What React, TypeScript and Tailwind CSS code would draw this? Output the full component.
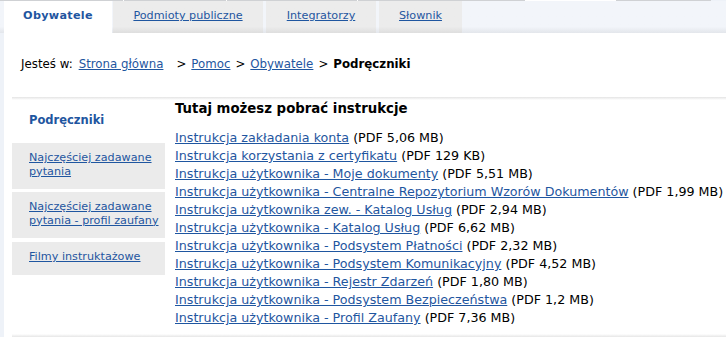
import React from "react";

const links: [string, string][] = [
  ["Instrukcja zakładania konta", "(PDF 5,06 MB)"],
  ["Instrukcja korzystania z certyfikatu", "(PDF 129 KB)"],
  ["Instrukcja użytkownika - Moje dokumenty", "(PDF 5,51 MB)"],
  ["Instrukcja użytkownika - Centralne Repozytorium Wzorów Dokumentów", "(PDF 1,99 MB)"],
  ["Instrukcja użytkownika zew. - Katalog Usług", "(PDF 2,94 MB)"],
  ["Instrukcja użytkownika - Katalog Usług", "(PDF 6,62 MB)"],
  ["Instrukcja użytkownika - Podsystem Płatności", "(PDF 2,32 MB)"],
  ["Instrukcja użytkownika - Podsystem Komunikacyjny", "(PDF 4,52 MB)"],
  ["Instrukcja użytkownika - Rejestr Zdarzeń", "(PDF 1,80 MB)"],
  ["Instrukcja użytkownika - Podsystem Bezpieczeństwa", "(PDF 1,2 MB)"],
  ["Instrukcja użytkownika - Profil Zaufany", "(PDF 7,36 MB)"],
];

const tabCls =
  "shrink-0 bg-gradient-to-b from-[#ececec] from-80% to-[#dedede] flex items-center justify-center text-[#1f56a0] underline pb-[1px]";

export default function App() {
  return (
    <div
      className="w-[726px] h-[337px] overflow-hidden bg-[#eef2f8] flex flex-col text-[12.7px] text-black"
      style={{ fontFamily: '"DejaVu Sans", Verdana, sans-serif' }}
    >
      {/* thin cut-off row at very top */}
      <div className="flex h-[1px] shrink-0">
        <div className="w-[123px] shrink-0 bg-[#cfd1d4]" />
        <div className="w-[1px] shrink-0 bg-white" />
        <div className="w-[102px] shrink-0 bg-[#cfd1d4]" />
        <div className="w-[1px] shrink-0 bg-white" />
        <div className="w-[130px] shrink-0 bg-[#cfd1d4]" />
        <div className="w-[1px] shrink-0 bg-white" />
        <div className="w-[167px] shrink-0 bg-[#cfd1d4]" />
        <div className="w-[91px] shrink-0 bg-white" />
        <div className="w-[95px] shrink-0 bg-[#cfd1d4]" />
      </div>
      {/* tabs */}
      <div className="flex h-[32px] shrink-0 bg-gradient-to-b from-[#f2f5fa] from-80% to-[#e3e6eb] text-[11.2px]">
        <div className="w-[4px] shrink-0" />
        <div className="w-[108px] shrink-0 bg-white flex items-center justify-center font-bold text-[#1f56a0] pb-[1px] tracking-[0.3px]">
          Obywatele
        </div>
        <div className="w-[1px] shrink-0" />
        <div className={`w-[150px] ${tabCls}`}>Podmioty publiczne</div>
        <div className="w-[3px] shrink-0" />
        <div className={`w-[110px] ${tabCls}`}>Integratorzy</div>
        <div className="w-[3px] shrink-0" />
        <div className={`w-[83px] ${tabCls}`}>Słownik</div>
      </div>
      <div className="flex flex-1 min-h-0">
        <div className="w-[4px] shrink-0" />
        <div className="flex-1 min-w-0 bg-white flex flex-col">
          {/* breadcrumb */}
          <div className="h-[64px] shrink-0 pl-[17px] pt-[23px] whitespace-pre text-[11.8px]">
            <span>Jesteś w:</span>
            <span className="ml-[6px] text-[#1f56a0] underline">Strona główna</span>
            <span className="ml-[13px] mr-[5px]">&gt;</span>
            <span className="text-[#1f56a0] underline">Pomoc</span>
            <span className="mx-[5px]">&gt;</span>
            <span className="text-[#1f56a0] underline">Obywatele</span>
            <span className="mx-[5px]">&gt;</span>
            <span className="font-bold">Podręczniki</span>
          </div>
          {/* main */}
          <div className="ml-[8px] flex-1 min-h-0 flex flex-col">
            <div className="h-[3px] bg-gradient-to-b from-[#e4e4e4] to-white shrink-0" />
            <div className="flex flex-1 min-h-0">
              <div className="w-[153px] flex flex-col shrink-0 text-[11.2px]">
                <div className="h-[43px] pl-[17px] pt-[12px] font-bold text-[11.5px] text-[#1f56a0]">
                  Podręczniki
                </div>
                <div className="h-[46px] bg-[#ebebeb] pl-[17px] pt-[8px] leading-[13.5px]">
                  <span className="text-[#1f56a0] underline">Najczęściej zadawane pytania</span>
                </div>
                <div className="h-[3px]" />
                <div className="h-[46px] bg-[#ebebeb] pl-[17px] pt-[8px] leading-[13.5px]">
                  <span className="text-[#1f56a0] underline">
                    Najczęściej zadawane pytania - profil zaufany
                  </span>
                </div>
                <div className="h-[4px]" />
                <div className="h-[33px] bg-[#ebebeb] pl-[17px] pt-[8px] leading-[13.5px]">
                  <span className="text-[#1f56a0] underline">Filmy instruktażowe</span>
                </div>
              </div>
              <div className="flex-1 min-w-0 pl-[10px]">
                <div className="font-bold text-[13.3px] leading-[18px] mb-[11px]">
                  Tutaj możesz pobrać instrukcje
                </div>
                <div className="flex flex-col leading-[18px] whitespace-nowrap">
                  {links.map(([t, s]) => (
                    <div key={t}>
                      <span className="text-[#1f56a0] underline">{t}</span> {s}
                    </div>
                  ))}
                </div>
              </div>
            </div>
            <div className="h-[3px] bg-gradient-to-b from-white to-[#e6e6e6] shrink-0" />
          </div>
        </div>
      </div>
    </div>
  );
}
